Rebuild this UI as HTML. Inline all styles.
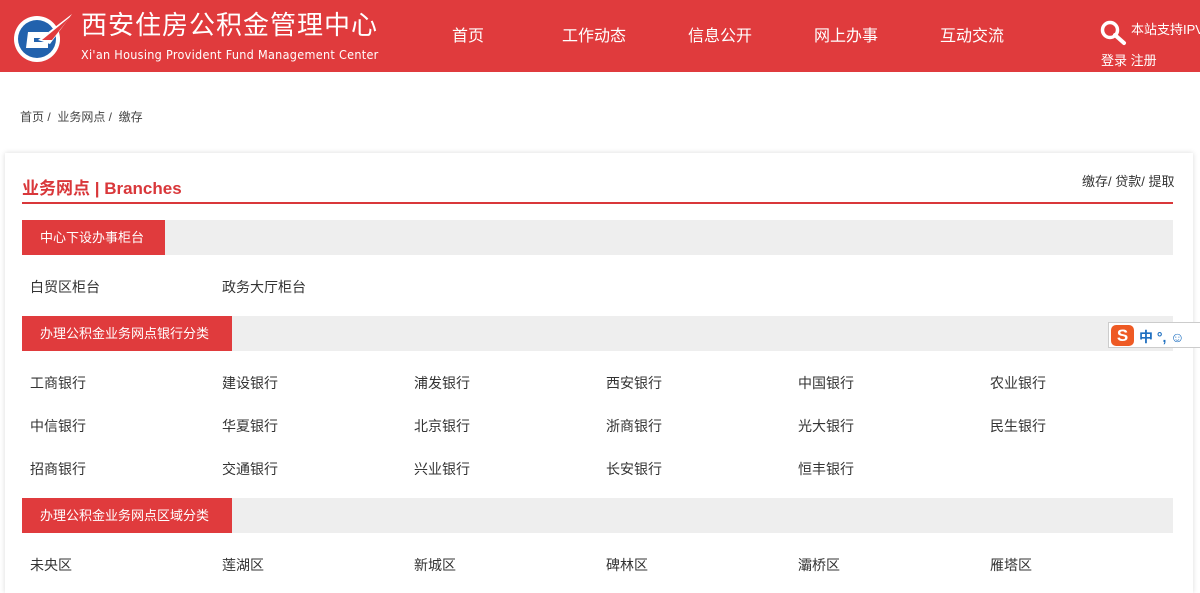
<!DOCTYPE html>
<html><head><meta charset="utf-8"><style>
*{margin:0;padding:0;box-sizing:border-box}
body{width:1200px;height:584px;overflow:hidden;background:#fff;font-family:"Liberation Sans","Noto Sans CJK SC",sans-serif;position:relative}
.hd{position:absolute;left:0;top:0;width:1200px;height:72px;background:#e03b3d;color:#fff}
.t1{position:absolute;left:81px;top:9px;font-size:26px;letter-spacing:1px;line-height:32px}
.t2{position:absolute;left:81px;top:47px;font-size:12.5px;line-height:16px;letter-spacing:0.3px;font-family:"DejaVu Sans Condensed","Liberation Sans",sans-serif}
.nav{position:absolute;top:27px;font-size:16px;line-height:20px}
.bc{position:absolute;left:20px;top:108px;font-size:12px;color:#444}
.card{position:absolute;left:5px;top:153px;width:1188px;height:440px;background:#fff;box-shadow:0 0 5px rgba(0,0,0,.15)}
.ttl{position:absolute;left:22px;top:174px;font-size:17px;font-weight:bold;color:#d9373a}
.ln{position:absolute;left:22px;top:202px;width:1151px;height:2px;background:#d9373a}
.bar{position:absolute;left:22px;width:1151px;height:35px;background:#eee}
.tab{position:absolute;left:0;top:0;height:35px;background:#e03b3d;color:#fff;font-size:13px;line-height:35px;padding-left:18px}
.it{position:absolute;font-size:14px;color:#333;line-height:18px}
</style></head><body>
<div class="hd">
<svg style="position:absolute;left:10px;top:10px" width="66" height="54" viewBox="0 0 66 54"><circle cx="27" cy="29" r="23" fill="#fff"/><circle cx="27" cy="29" r="19" fill="#2262ad"/><path d="M18 22h20v6H24v4h14v6H16z" fill="#fff"/><path d="M28 30L62 4 40 34z" fill="#fff"/><path d="M32 30L60 7 42 30z" fill="#e03b3d"/></svg>
<div class="t1">西安住房公积金管理中心</div>
<div class="t2">Xi'an Housing Provident Fund  Management Center</div>
<div class="nav" style="left:452px">首页</div>
<div class="nav" style="left:562px">工作动态</div>
<div class="nav" style="left:688px">信息公开</div>
<div class="nav" style="left:814px">网上办事</div>
<div class="nav" style="left:940px">互动交流</div>
<svg style="position:absolute;left:1100px;top:20px" width="30" height="26" viewBox="0 0 30 26"><circle cx="10" cy="10" r="7.5" fill="none" stroke="#fff" stroke-width="3.5"/><path d="M15 15l9 8" stroke="#fff" stroke-width="4" stroke-linecap="round"/></svg>
<div style="position:absolute;left:1131px;top:19px;font-size:13px;white-space:nowrap">本站支持IPV6</div>
<div style="position:absolute;left:1101px;top:50px;font-size:13px">登录 注册</div>
</div>
<div class="bc">首页 /&nbsp; 业务网点 /&nbsp; 缴存</div>
<div class="card"></div>
<div class="ttl">业务网点 | Branches</div>
<div style="position:absolute;left:1082px;top:171px;font-size:13px;color:#333">缴存/ 贷款/ 提取</div>
<div class="ln"></div>
<div class="bar" style="top:220px"><div class="tab" style="width:143px">中心下设办事柜台</div></div>
<div class="it" style="left:30px;top:278px">白贸区柜台</div><div class="it" style="left:222px;top:278px">政务大厅柜台</div>
<div class="bar" style="top:316px"><div class="tab" style="width:210px">办理公积金业务网点银行分类</div></div>
<div class="it" style="left:30px;top:374px">工商银行</div><div class="it" style="left:222px;top:374px">建设银行</div><div class="it" style="left:414px;top:374px">浦发银行</div><div class="it" style="left:606px;top:374px">西安银行</div><div class="it" style="left:798px;top:374px">中国银行</div><div class="it" style="left:990px;top:374px">农业银行</div>
<div class="it" style="left:30px;top:417px">中信银行</div><div class="it" style="left:222px;top:417px">华夏银行</div><div class="it" style="left:414px;top:417px">北京银行</div><div class="it" style="left:606px;top:417px">浙商银行</div><div class="it" style="left:798px;top:417px">光大银行</div><div class="it" style="left:990px;top:417px">民生银行</div>
<div class="it" style="left:30px;top:460px">招商银行</div><div class="it" style="left:222px;top:460px">交通银行</div><div class="it" style="left:414px;top:460px">兴业银行</div><div class="it" style="left:606px;top:460px">长安银行</div><div class="it" style="left:798px;top:460px">恒丰银行</div>
<div class="bar" style="top:498px"><div class="tab" style="width:210px">办理公积金业务网点区域分类</div></div>
<div class="it" style="left:30px;top:556px">未央区</div><div class="it" style="left:222px;top:556px">莲湖区</div><div class="it" style="left:414px;top:556px">新城区</div><div class="it" style="left:606px;top:556px">碑林区</div><div class="it" style="left:798px;top:556px">灞桥区</div><div class="it" style="left:990px;top:556px">雁塔区</div>
<div style="position:absolute;left:1108px;top:322px;width:92px;height:26px;background:#fff;border:1px solid #ccc;border-right:none"></div>
<div style="position:absolute;left:1111px;top:325px;width:23px;height:21px;background:#ee5a24;border-radius:5px;color:#fff;font-weight:bold;font-size:17px;text-align:center;line-height:21px">S</div>
<div style="position:absolute;left:1139px;top:327px;font-size:14px;color:#1e6fc0;font-weight:bold;white-space:nowrap">中 °, ☺</div>
</body></html>
